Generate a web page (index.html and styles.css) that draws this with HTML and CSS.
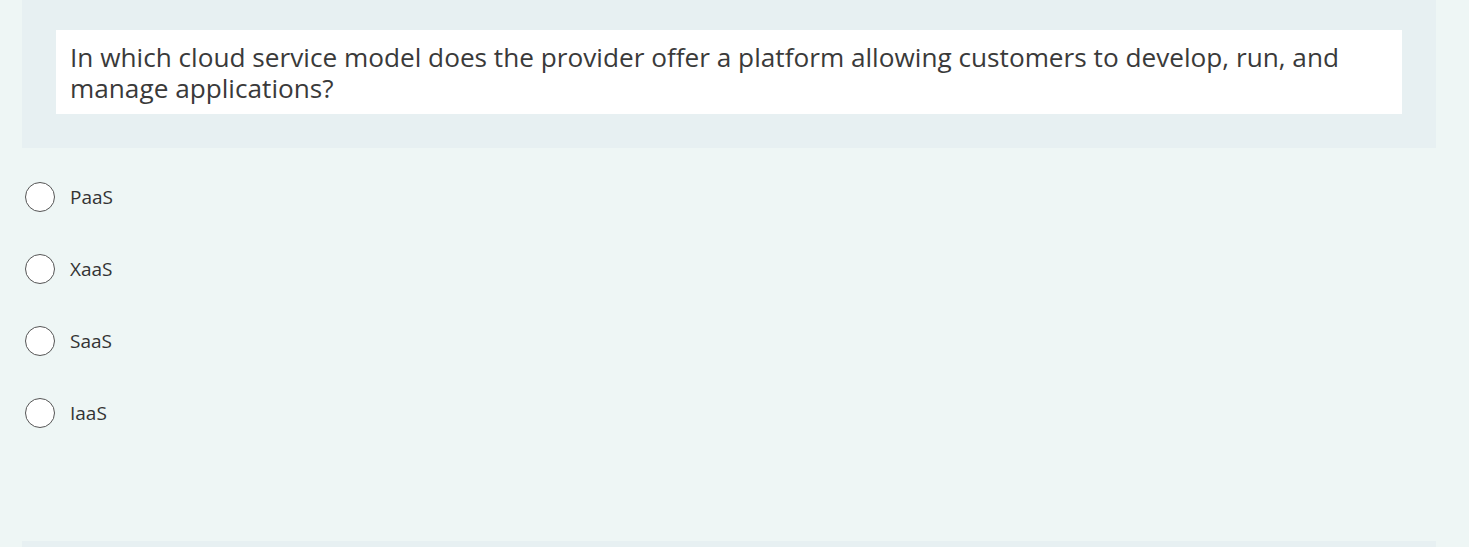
FILE: index.html
```html
<!DOCTYPE html>
<html>
<head>
<meta charset="utf-8">
<link rel="stylesheet" href="styles.css">
</head>
<body>
<div class="page">
  <div class="question-card">
    <div class="question-text">In which cloud service model does the provider offer a platform allowing customers to develop, run, and manage applications?</div>
  </div>
  <div class="options">
    <label class="option"><span class="radio"></span><span class="label">PaaS</span></label>
    <label class="option"><span class="radio"></span><span class="label">XaaS</span></label>
    <label class="option"><span class="radio"></span><span class="label">SaaS</span></label>
    <label class="option"><span class="radio"></span><span class="label">IaaS</span></label>
  </div>
  <div class="next-card"></div>
</div>
</body>
</html>
```
FILE: styles.css
```css
html, body {
  margin: 0;
  padding: 0;
  background: #eef6f5;
  font-family: "Open Sans", "Noto Sans", sans-serif;
  color: #333;
  overflow: hidden;
}
.page {
  width: 1469px;
  height: 547px;
  display: flex;
  flex-direction: column;
}
.question-card {
  margin: 0 33px 0 22px;
  height: 148px;
  box-sizing: border-box;
  background: #e7f0f2;
  padding: 30px 34px 0 34px;
}
.question-text {
  background: #fff;
  height: 84px;
  box-sizing: border-box;
  padding: 12px 14px 0 14px;
  font-size: 26.2px;
  line-height: 31px;
  color: #3a3a3a;
  overflow: hidden;
}
.options {
  display: flex;
  flex-direction: column;
  padding: 34px 0 0 25px;
  gap: 42px;
}
.option {
  display: flex;
  align-items: center;
  height: 30px;
}
.radio {
  width: 28px;
  height: 28px;
  border: 1px solid #555;
  border-radius: 50%;
  background: #fff;
  flex: none;
}
.label {
  margin-left: 15px;
  font-size: 19px;
  color: #333;
}
.next-card {
  margin: auto 33px 0 22px;
  height: 6px;
  background: #e7f0f2;
}
```
